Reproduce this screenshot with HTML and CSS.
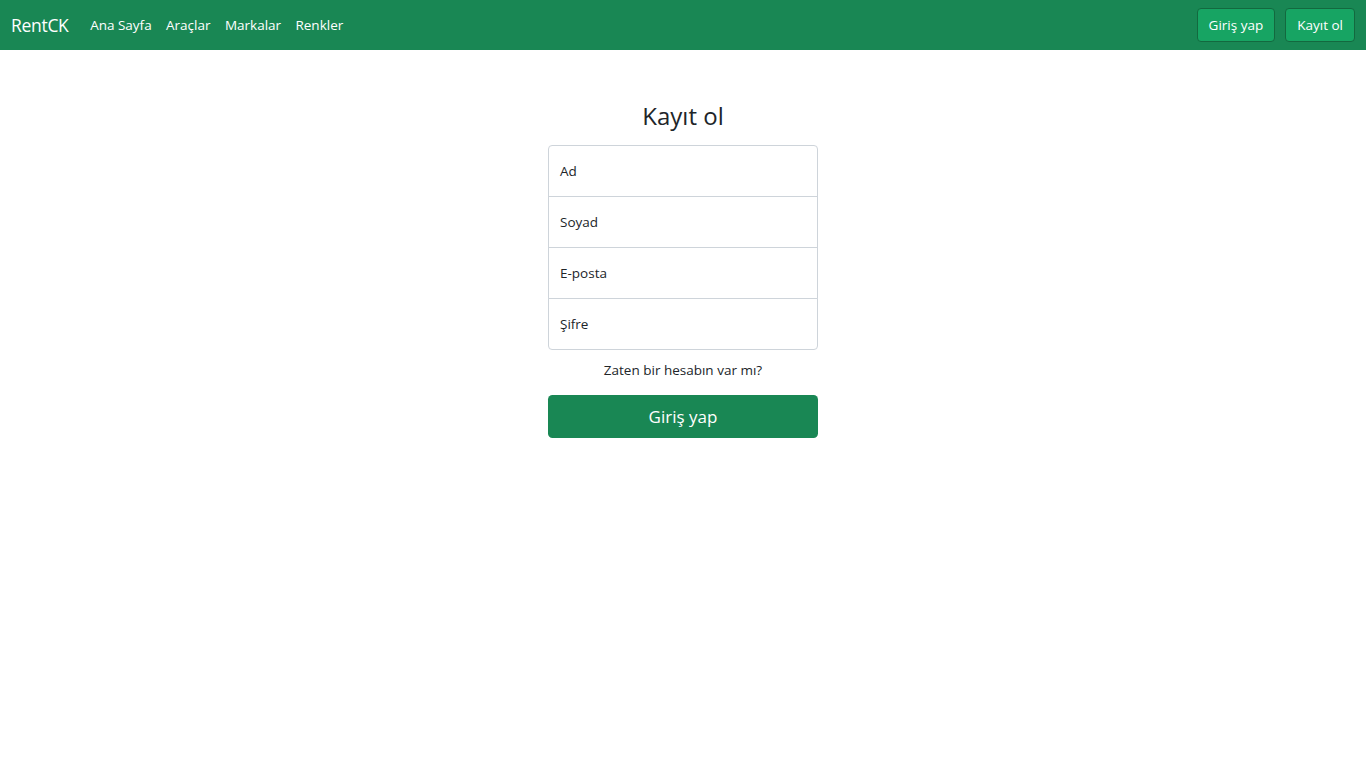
FILE: index.html
```html
<!DOCTYPE html>
<html lang="tr">
<head>
<meta charset="utf-8">
<title>RentCK - Kayıt ol</title>
<link rel="stylesheet" href="styles.css">
</head>
<body>
<nav class="navbar">
  <div class="nav-left">
    <a class="brand" href="#">RentCK</a>
    <a class="nav-link" href="#">Ana Sayfa</a>
    <a class="nav-link" href="#">Araçlar</a>
    <a class="nav-link" href="#">Markalar</a>
    <a class="nav-link" href="#">Renkler</a>
  </div>
  <div class="nav-right">
    <button class="nav-btn">Giriş yap</button>
    <button class="nav-btn">Kayıt ol</button>
  </div>
</nav>
<main class="signin">
  <h1 class="title">Kayıt ol</h1>
  <div class="fields">
    <div class="field first">Ad</div>
    <div class="field">Soyad</div>
    <div class="field">E-posta</div>
    <div class="field last">Şifre</div>
  </div>
  <p class="hint">Zaten bir hesabın var mı?</p>
  <button class="submit">Giriş yap</button>
</main>
</body>
</html>
```
FILE: styles.css
```css
* { box-sizing: border-box; }
html, body { margin: 0; padding: 0; }
body {
  font-family: "Open Sans", "Noto Sans", sans-serif;
  font-size: 14.4px;
  line-height: 1.5;
  color: #212529;
  background: #fff;
}
.navbar {
  height: 50px;
  background: #198754;
  display: flex;
  align-items: center;
  justify-content: space-between;
  padding: 0 11px;
}
.nav-left { display: flex; align-items: center; }
.brand {
  color: #fff;
  text-decoration: none;
  font-size: 17.5px;
  margin-right: 14.4px;
  letter-spacing: -0.3px;
}
.nav-link {
  color: #fff;
  text-decoration: none;
  font-size: 13.5px;
  padding: 0 7.2px;
}
.nav-right { display: flex; gap: 10px; }
.nav-btn {
  font-family: inherit;
  font-size: 13.5px;
  color: #fff;
  background: #17a463;
  border: 1px solid #13693f;
  border-radius: 4px;
  height: 34px;
  padding: 0 11px;
  cursor: pointer;
}
.signin {
  width: 270px;
  margin: 0 auto;
  padding-top: 51px;
  text-align: center;
}
.title {
  font-size: 24px;
  font-weight: 400;
  line-height: 30px;
  margin: 0 0 14px;
}
.fields { display: flex; flex-direction: column; }
.field {
  height: 52px;
  border: 1px solid #ced4da;
  margin-top: -1px;
  padding: 0 11px;
  display: flex;
  align-items: center;
  text-align: left;
  font-size: 13.5px;
  background: #fff;
}
.field.first { margin-top: 0; border-radius: 4px 4px 0 0; }
.field.last { border-radius: 0 0 4px 4px; }
.hint {
  margin: 9px 0 14px;
  font-size: 13.5px;
  line-height: 22px;
}
.submit {
  width: 100%;
  height: 43px;
  background: #198754;
  color: #fff;
  border: 0;
  border-radius: 4.5px;
  font-family: inherit;
  font-size: 17px;
  cursor: pointer;
}
```
